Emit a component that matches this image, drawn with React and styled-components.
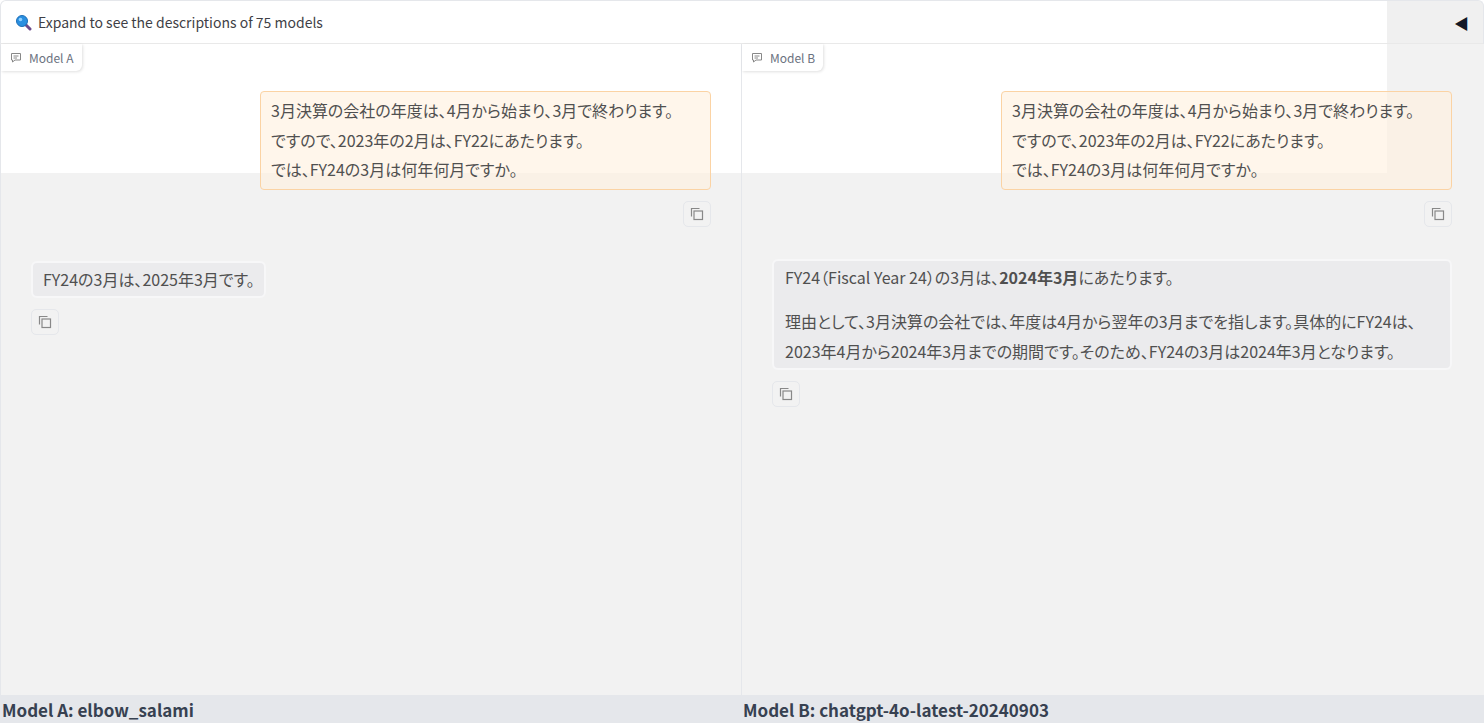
import React from "react";
import styled, { createGlobalStyle } from "styled-components";

const Global = createGlobalStyle`
  html,body{margin:0;padding:0;}
  body{font-family:"Noto Sans CJK JP","Noto Sans",sans-serif;color:#505050;background:#fff;font-feature-settings:"palt";}
`;
const Page = styled.div`width:1484px;height:723px;display:flex;flex-direction:column;overflow:hidden;`;
const Header = styled.div`
  border:1px solid #e5e7eb;border-bottom:1px solid #e9e9e9;border-radius:6px 6px 0 0;
  display:flex;align-items:center;justify-content:space-between;padding:0 14px 0 14px;box-sizing:border-box;
  background:linear-gradient(#fff,#fff) no-repeat 0 0/1386px 100%, #f0f0f0;
  font-size:14px;color:#3f3f46;height:44px;font-feature-settings:normal;
`;
const HeadLeft = styled.div`display:flex;align-items:center;gap:6px;`;
const Panels = styled.div`flex:1;display:grid;grid-template-columns:741px 1fr;min-height:0;`;
const Panel = styled.div`
  position:relative;border-left:1px solid #e5e7eb;border-right:${p=>p.$last?"1px solid #e5e7eb":"none"};
  background:linear-gradient(#fff,#fff) no-repeat 0 0/${p=>p.$w}px 129px, #f2f2f2;
  display:flex;flex-direction:column;padding:47px ${p=>p.$pr}px 0 30px;box-sizing:border-box;
`;
const Tab = styled.div`
  position:absolute;left:0;top:0;height:27px;display:flex;align-items:center;gap:7px;padding:0 8px 0 9px;
  font-size:12px;color:#6b7280;background:#fff;border-radius:0 0 6px 0;box-shadow:1px 1px 3px rgba(0,0,0,.12);
  font-feature-settings:normal;
`;
const UserBubble = styled.div`
  align-self:flex-end;width:451px;box-sizing:border-box;padding:4px 10px;white-space:nowrap;
  background:rgba(255,240,222,.6);border:1.5px solid #fbd3a4;border-radius:4px;
  font-size:16px;line-height:29.5px;
`;
const BotBubble = styled.div`
  align-self:flex-start;box-sizing:border-box;padding:${p=>p.$wide?"2px 12px 2px 11px":"2px 10px"};
  width:${p=>p.$wide?"680px":"auto"};
  background:#ebebed;border:2px solid #f7f7f8;border-radius:6px;font-size:16px;line-height:29.5px;
  margin-top:${p=>p.$mt}px;
`;
const P = styled.p`margin:0;& + &{margin-top:15px;}`;
const CopyBtn = styled.div`
  align-self:${p=>p.$end?"flex-end":"flex-start"};width:28px;height:26px;box-sizing:border-box;
  border:1px solid #e5e7eb;border-radius:5px;display:flex;align-items:center;justify-content:center;
  margin-top:11px;background:#f2f2f2;
`;
const Footer = styled.div`
  height:28px;background:#e5e7eb;display:grid;grid-template-columns:741px 1fr;align-items:center;
  font-size:17px;font-weight:600;color:#374151;font-feature-settings:normal;
  & > div{padding-left:2px;}
`;

const Copy = () => (
  <svg width="14" height="14" viewBox="0 0 14 14" fill="none" stroke="#888" strokeWidth="1.2">
    <rect x="4" y="4" width="8.5" height="8.5" />
    <path d="M1.5 9.5V1.5h8" />
  </svg>
);
const Chat = () => (
  <svg width="12" height="12" viewBox="0 0 12 12" fill="none" stroke="#888" strokeWidth="1">
    <path d="M1.5 1.5h9v6.5H5l-2.5 2V8H1.5z" /><path d="M3.5 4h5M3.5 6h3.5" />
  </svg>
);
const Mag = () => (
  <svg width="17" height="17" viewBox="0 0 17 17">
    <path d="M10 10l5 5" stroke="#6b4a8a" strokeWidth="3" strokeLinecap="round" />
    <circle cx="7" cy="7" r="5.5" fill="#2a8fe0" stroke="#1d6fb8" strokeWidth="1" />
    <circle cx="5.5" cy="5.5" r="1.8" fill="#8fd0ff" />
  </svg>
);

const User = () => (
  <UserBubble>
    3月決算の会社の年度は、4月から始まり、3月で終わります。<br />
    ですので、2023年の2月は、FY22にあたります。<br />
    では、FY24の3月は何年何月ですか。
  </UserBubble>
);

export default function App() {
  return (
    <Page>
      <Global />
      <Header>
        <HeadLeft><Mag />Expand to see the descriptions of 75 models</HeadLeft>
        <span style={{ fontSize: 15, color: "#111827" }}>◀</span>
      </Header>
      <Panels>
        <Panel $w={741} $pr={30}>
          <Tab><Chat />Model A</Tab>
          <User />
          <CopyBtn $end><Copy /></CopyBtn>
          <BotBubble $mt={34}><P>FY24の3月は、2025年3月です。</P></BotBubble>
          <CopyBtn><Copy /></CopyBtn>
        </Panel>
        <Panel $w={645} $pr={32} $last>
          <Tab><Chat />Model B</Tab>
          <User />
          <CopyBtn $end><Copy /></CopyBtn>
          <BotBubble $mt={32} $wide>
            <P>FY24（Fiscal Year 24）の3月は、<b>2024年3月</b>にあたります。</P>
            <P>理由として、3月決算の会社では、年度は4月から翌年の3月までを指します。具体的にFY24は、2023年4月から2024年3月までの期間です。そのため、FY24の3月は2024年3月となります。</P>
          </BotBubble>
          <CopyBtn><Copy /></CopyBtn>
        </Panel>
      </Panels>
      <Footer>
        <div>Model A: elbow_salami</div>
        <div>Model B: chatgpt-4o-latest-20240903</div>
      </Footer>
    </Page>
  );
}
